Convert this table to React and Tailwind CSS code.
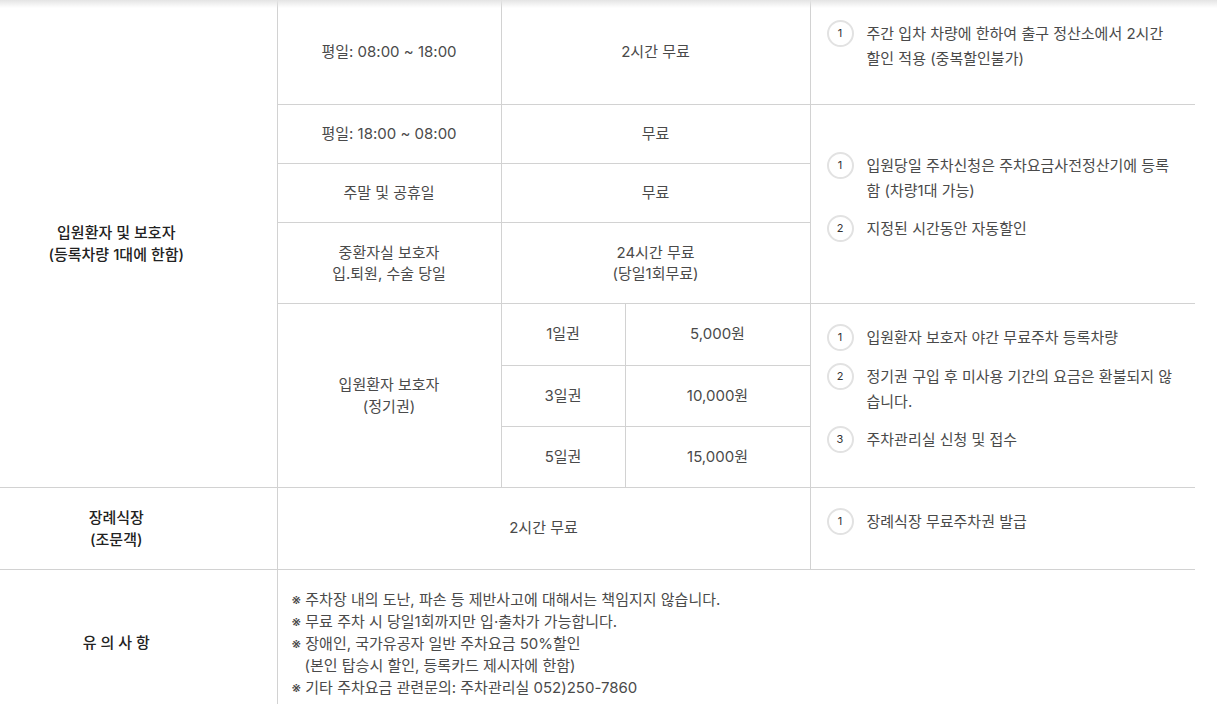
import React from "react";

const font = { fontFamily: '"Inter", "Noto Sans CJK KR", sans-serif' };

function Items({ items }) {
  return (
    <ul className="flex flex-col">
      {items.map((it, i) => (
        <li key={i} className="flex items-start mb-[13px]">
          <span className="shrink-0 mt-[-1px] w-[27px] h-[27px] rounded-full border-2 border-[#e2e2e2] flex items-center justify-center text-[11px] text-[#333] mr-[13px]">
            {i + 1}
          </span>
          <span className="leading-[25px]">
            {it.map((l, j) => (
              <span key={j} className="block whitespace-nowrap">{l}</span>
            ))}
          </span>
        </li>
      ))}
    </ul>
  );
}

const td = "border border-[#d2d2d2] text-center align-middle";
const head = "border border-[#d2d2d2] border-l-0 text-center align-middle font-medium text-[#222] leading-[22px] pr-[44px]";
const note = "border border-[#d2d2d2] border-r-0 align-middle pl-[16px] pr-4 text-left";

export default function App() {
  return (
    <div className="relative w-[1217px] h-[704px] overflow-hidden bg-white text-[15px] tracking-normal text-[#4a4a4a]" style={font}>
      <table className="w-[1195px] border-collapse table-fixed -mt-[1px]">
        <colgroup>
          <col className="w-[277px]" />
          <col className="w-[224px]" />
          <col className="w-[124px]" />
          <col className="w-[185px]" />
          <col className="w-[385px]" />
        </colgroup>
        <tbody>
          <tr className="h-[105px]">
            <td rowSpan={7} className={head}>
              입원환자 및 보호자<br />(등록차량 1대에 한함)
            </td>
            <td className={td}>평일: 08:00 ~ 18:00</td>
            <td colSpan={2} className={td}>2시간 무료</td>
            <td className={note}>
              <Items items={[["주간 입차 차량에 한하여 출구 정산소에서 2시간", "할인 적용 (중복할인불가)"]]} />
            </td>
          </tr>
          <tr className="h-[59px]">
            <td className={td}>평일: 18:00 ~ 08:00</td>
            <td colSpan={2} className={td}>무료</td>
            <td rowSpan={3} className={note}>
              <Items items={[["입원당일 주차신청은 주차요금사전정산기에 등록", "함 (차량1대 가능)"], ["지정된 시간동안 자동할인"]]} />
            </td>
          </tr>
          <tr className="h-[59px]">
            <td className={td}>주말 및 공휴일</td>
            <td colSpan={2} className={td}>무료</td>
          </tr>
          <tr className="h-[81px]">
            <td className={td + " leading-[21px]"}>중환자실 보호자<br />입.퇴원, 수술 당일</td>
            <td colSpan={2} className={td + " leading-[21px]"}>24시간 무료<br />(당일1회무료)</td>
          </tr>
          <tr className="h-[62px]">
            <td rowSpan={3} className={td + " leading-[22px]"}>입원환자 보호자<br />(정기권)</td>
            <td className={td}>1일권</td>
            <td className={td}>5,000원</td>
            <td rowSpan={3} className={note}>
              <Items items={[["입원환자 보호자 야간 무료주차 등록차량"], ["정기권 구입 후 미사용 기간의 요금은 환불되지 않", "습니다."], ["주차관리실 신청 및 접수"]]} />
            </td>
          </tr>
          <tr className="h-[61px]">
            <td className={td}>3일권</td>
            <td className={td}>10,000원</td>
          </tr>
          <tr className="h-[61px]">
            <td className={td}>5일권</td>
            <td className={td}>15,000원</td>
          </tr>
          <tr className="h-[82px]">
            <td className={head}>장례식장<br />(조문객)</td>
            <td colSpan={3} className={td}>2시간 무료</td>
            <td className={note}>
              <Items items={[["장례식장 무료주차권 발급"]]} />
            </td>
          </tr>
          <tr className="h-[146px]">
            <td className={head}>유 의 사 항</td>
            <td colSpan={4} className="border border-[#d2d2d2] border-r-0 align-top pt-[19px] pl-[14px] text-left leading-[22px]">
              <p>※ 주차장 내의 도난, 파손 등 제반사고에 대해서는 책임지지 않습니다.</p>
              <p>※ 무료 주차 시 당일1회까지만 입·출차가 가능합니다.</p>
              <p>※ 장애인, 국가유공자 일반 주차요금 50%할인</p>
              <p className="pl-[13px]">(본인 탑승시 할인, 등록카드 제시자에 한함)</p>
              <p>※ 기타 주차요금 관련문의: 주차관리실 052)250-7860</p>
            </td>
          </tr>
        </tbody>
      </table>
      <div className="absolute left-0 top-0 w-full h-[8px] bg-gradient-to-b from-[#e4e4e4] to-transparent" />
    </div>
  );
}
